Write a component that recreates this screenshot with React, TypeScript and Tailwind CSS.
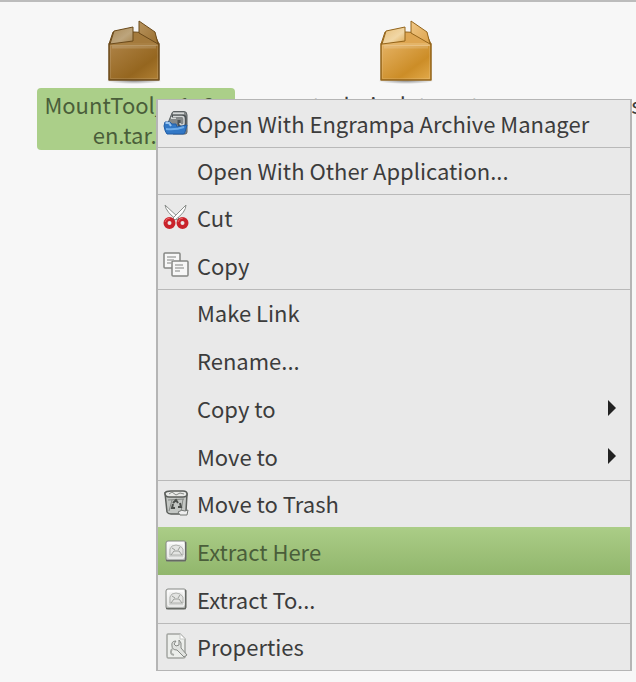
import type { ReactNode } from 'react';

type MenuItem = {
  label: string;
  icon?: ReactNode;
  submenu?: boolean;
  active?: boolean;
};

function PackageIcon({ id, selected }: { id: string; selected?: boolean }) {
  const edge = selected ? '#6b4a1b' : '#93641b';
  return (
    <svg width="60" height="68" viewBox="2 0 60 68" aria-hidden="true">
      <defs>
        <linearGradient id={`${id}-front`} x1="0" y1="0" x2="1" y2="1">
          <stop offset="0" stopColor={selected ? '#ae8347' : '#e5b264'} />
          <stop offset="0.65" stopColor={selected ? '#95661f' : '#cc8d27'} />
          <stop offset="1" stopColor={selected ? '#b08034' : '#e3ab4c'} />
        </linearGradient>
        <linearGradient id={`${id}-flap`} x1="0" y1="0" x2="1" y2="1">
          <stop offset="0" stopColor={selected ? '#a98955' : '#e7bd76'} />
          <stop offset="0.6" stopColor={selected ? '#bda57d' : '#f1d7a6'} />
          <stop offset="1" stopColor={selected ? '#a7844e' : '#dda850'} />
        </linearGradient>
        <linearGradient id={`${id}-side`} x1="0" y1="0" x2="1" y2="1">
          <stop offset="0" stopColor={selected ? '#b8945e' : '#f0c888'} />
          <stop offset="1" stopColor={selected ? '#9a6f30' : '#dda24a'} />
        </linearGradient>
        <radialGradient id={`${id}-shade`}>
          <stop offset="0" stopColor="#000" stopOpacity="0.4" />
          <stop offset="1" stopColor="#000" stopOpacity="0" />
        </radialGradient>
      </defs>
      <ellipse cx="30" cy="61" rx="28" ry="3" fill={`url(#${id}-shade)`} />
      <path d="M5 24 9 12 30 12 50 13 55 24Z" fill={selected ? '#a47a3c' : '#dea652'} stroke={edge} />
      <path d="M5 24H55V60H5Z" fill={`url(#${id}-front)`} stroke={edge} strokeWidth="1.5" strokeLinejoin="round" />
      <path d="M6 24.500H54" stroke={selected ? '#a98043' : '#e4b468'} strokeWidth="3" />
      <path d="M6.5 25.5H53.5V58.5H6.5Z" fill="none" stroke="#fff" strokeOpacity="0.12" />
      <path d="M8 27H52" stroke="#fff" strokeOpacity="0.15" strokeWidth="3" />
      <path d="M10 11 29 7V21L6 24Z" fill={`url(#${id}-flap)`} stroke={edge} strokeLinejoin="round" />
      <path d="M35 1 51 12 54 24 35 13Z" fill={`url(#${id}-side)`} stroke={edge} strokeLinejoin="round" />
    </svg>
  );
}

function EngrampaIcon() {
  return (
    <svg width="26" height="26" viewBox="0 0 26 26" aria-hidden="true">
      <path d="M5 13 9 3Q9.500 1.500 11 1.500H21Q24 1.500 24 5V22Q24 24 22 24H10Z" fill="#85898a" stroke="#5b6163" />
      <path d="M10 3.500H21M8 8H13" stroke="#d5d8d8" strokeWidth="2" />
      <path d="M9 6H20Q22 6 22 8V14Q22 16 19 16T16 14V10" fill="none" stroke="#4c5255" strokeWidth="3" />
      <path d="M10 6.500H19Q21 6.500 21 9V13Q21 15 19 15T17 13" fill="none" stroke="#d3d6d6" strokeWidth="1.500" />
      <path d="M2 12H7L9 14H13L14 17 24 15 22 22Q22 24 20 24H4Q2 22 1 16Z" fill="#3278c6" stroke="#205da6" />
      <path d="M2.500 13H6L8 16" fill="none" stroke="#9bc5ef" strokeWidth="2" />
      <path d="M3 19Q13 20 21 17" fill="none" stroke="#6eabe9" strokeWidth="2" />
    </svg>
  );
}

function CutIcon() {
  return (
    <svg width="26" height="26" viewBox="0 0 26 26" aria-hidden="true">
      <path d="M2 1Q3 8 14 16L16 14Z" fill="#fff" stroke="#8a8e8b" />
      <path d="M23 1Q23 8 12 16L10 14Z" fill="#fff" stroke="#8a8e8b" />
      <g fill="none" stroke="#c9232b" strokeWidth="4">
        <ellipse cx="6.500" cy="19" rx="4" ry="4" />
        <ellipse cx="19.500" cy="19" rx="4" ry="4" />
      </g>
      <path d="M2 18Q3 14 7 14M15 18Q16 14 20 14" fill="none" stroke="#ef6467" />
    </svg>
  );
}

function CopyIcon() {
  return (
    <svg width="26" height="26" viewBox="0 0 26 26" aria-hidden="true">
      <g fill="#f7f7f7" stroke="#858784" strokeWidth="1.500">
        <rect x="1" y="1" width="16" height="15" rx="1" />
        <rect x="9" y="9" width="16" height="15" rx="1" />
      </g>
      <path d="M4 5H13M4 8H11M4 11H8M12 13H20M12 16H21M12 19H17" stroke="#a9aba9" strokeWidth="1.500" />
    </svg>
  );
}

function TrashIcon() {
  return (
    <svg width="26" height="26" viewBox="0 0 26 26" aria-hidden="true">
      <path d="M2 3 4 22Q5 24 8 24H19Q22 24 23 21L24 4Z" fill="#c3c6c3" stroke="#5b5e5b" strokeWidth="1.500" />
      <path d="M2 3Q3 1 8 1H20Q24 1 24 4T20 7H6Q2 7 2 3Z" fill="#e8e9e7" stroke="#5b5e5b" strokeWidth="1.500" />
      <path d="M6 4 9 2 13 5 17 3 21 4M5 10 21 9M6 21 9 10M20 9 18 22" fill="none" stroke="#858885" />
      <path d="M10 13 13 10 15 13M17 13 18 17H15M12 18H9L10 14" fill="none" stroke="#4c4f4c" strokeWidth="2" />
      <path d="M15 22Q19 19 22 21L25 20 24 25H17Z" fill="#eee" stroke="#737673" />
    </svg>
  );
}

function ExtractIcon({ id }: { id: string }) {
  return (
    <svg width="26" height="26" viewBox="0 0 26 26" aria-hidden="true">
      <defs>
        <linearGradient id={id} x1="0" y1="0" x2="0" y2="1">
          <stop offset="0" stopColor="#fafafa" />
          <stop offset="1" stopColor="#c9cbc8" />
        </linearGradient>
      </defs>
      <rect x="3" y="3" width="20" height="20" rx="2" fill={`url(#${id})`} stroke="#858884" />
      <path d="M3 22.500H23M22.500 4V22" stroke="#666965" strokeWidth="1.500" />
      <rect x="5" y="5" width="16" height="15" rx="1" fill="none" stroke="#fff" />
      <path d="M7 11Q8 7 13 7T20 11V17H7Z" fill="#e3e4e2" stroke="#b0b2af" />
      <path d="M8 17 11 13H16L19 17M9 10 12 12M17 9 15 12" fill="none" stroke="#9b9e9a" />
    </svg>
  );
}

function PropertiesIcon() {
  return (
    <svg width="26" height="26" viewBox="0 0 26 26" aria-hidden="true">
      <path d="M5 1H17L22 6V24Q22 25 20 25H5Q4 25 4 23V2Q4 1 5 1Z" fill="#eceeeb" stroke="#a2a5a1" strokeWidth="1.500" />
      <path d="M17 1V6H22" fill="#fff" stroke="#c6c8c5" />
      <path d="M13 8Q8 8 9 13Q9 17 14 17L21 24 24 22 18 15Q19 9 16 7V12L13 13 11 11Z" fill="#e0e2df" stroke="#868985" />
      <path d="M9 16Q6 21 11 22" fill="none" stroke="#a9aca8" strokeWidth="2" />
    </svg>
  );
}

// A separator is drawn above every group but the first
const MENU_GROUPS: MenuItem[][] = [
  [{ label: 'Open With Engrampa Archive Manager', icon: <EngrampaIcon /> }],
  [{ label: 'Open With Other Application...' }],
  [
    { label: 'Cut', icon: <CutIcon /> },
    { label: 'Copy', icon: <CopyIcon /> },
  ],
  [
    { label: 'Make Link' },
    { label: 'Rename...' },
    { label: 'Copy to', submenu: true },
    { label: 'Move to', submenu: true },
  ],
  [
    { label: 'Move to Trash', icon: <TrashIcon /> },
    { label: 'Extract Here', icon: <ExtractIcon id="extract-here" />, active: true },
    { label: 'Extract To...', icon: <ExtractIcon id="extract-to" /> },
  ],
  [{ label: 'Properties', icon: <PropertiesIcon /> }],
];

function ContextMenu() {
  return (
    <div role="menu" className="absolute top-[97px] left-[156px] right-1 border-2 border-t border-b border-[#b5b5b5] bg-[#e9e9e9]">
      {MENU_GROUPS.map((group, i) => (
        <div key={i} role="group" className={i > 0 ? 'border-t border-[#b9b9b9]' : ''}>
          {group.map((item, j) => (
            <button
              key={item.label}
              type="button"
              role="menuitem"
              className={`flex w-full items-center gap-2 pl-[5px] pr-3.5 text-left ${j > 0 ? 'h-12' : i > 0 ? 'h-[46px] pb-0.5' : 'h-[47px] pb-0.5'} ${item.active ? 'bg-linear-to-b from-[#abcd87] to-[#91b66c] text-[#4a5e3a]' : 'text-[#3c3c3c]'}`}
            >
              <span className="w-[26px] shrink-0">{item.icon}</span>
              <span className="flex-1 whitespace-nowrap">{item.label}</span>
              {item.submenu && (
                <svg width="8" height="16" viewBox="0 0 8 16" aria-hidden="true">
                  <path d="M0 0 8 8 0 16Z" fill="#222" />
                </svg>
              )}
            </button>
          ))}
        </div>
      ))}
    </div>
  );
}

const FILES = [
  { id: 'mounttool', name: 'MountTool_v1_2_ en.tar.gz', selected: true },
  { id: 'technical', name: 'technical_target_a' },
  { id: 'samples', name: 'samples2' },
];

export default function App() {
  return (
    <div className="relative min-h-screen overflow-hidden border-t-2 border-[#bcbcbc] bg-[#f7f7f7] font-['Noto_Sans_CJK_SC',sans-serif] text-[22px] leading-[30px] text-[#3c3c3c]">
      <div className="flex pt-[18px]">
        {FILES.map((file) => (
          <div key={file.id} className="flex w-[272px] shrink-0 flex-col items-center">
            <PackageIcon id={file.id} selected={file.selected} />
            <div className={`w-[198px] rounded py-px text-center ${file.selected ? 'bg-[#abcf89] text-[#4a5e3a]' : ''}`}>{file.name}</div>
          </div>
        ))}
      </div>
      <ContextMenu />
    </div>
  );
}
